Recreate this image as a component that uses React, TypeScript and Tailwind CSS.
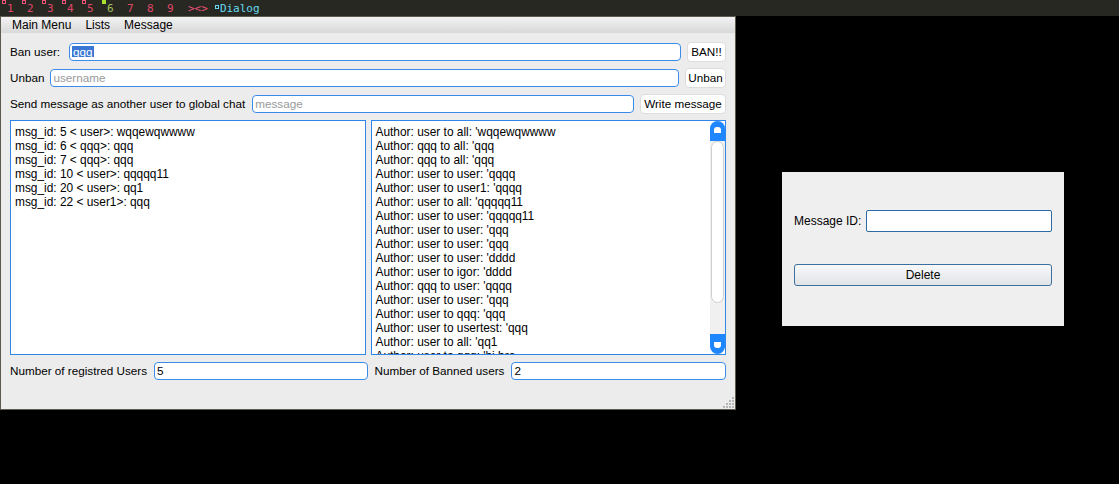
import type { ReactNode } from 'react'

const LEFT_LINES = [
  'msg_id: 5 < user>: wqqewqwwww',
  'msg_id: 6 < qqq>: qqq',
  'msg_id: 7 < qqq>: qqq',
  'msg_id: 10 < user>: qqqqq11',
  'msg_id: 20 < user>: qq1',
  'msg_id: 22 < user1>: qqq',
]

const RIGHT_LINES = [
  "Author: user to all: 'wqqewqwwww",
  "Author: qqq to all: 'qqq",
  "Author: qqq to all: 'qqq",
  "Author: user to user: 'qqqq",
  "Author: user to user1: 'qqqq",
  "Author: user to all: 'qqqqq11",
  "Author: user to user: 'qqqqq11",
  "Author: user to user: 'qqq",
  "Author: user to user: 'qqq",
  "Author: user to user: 'dddd",
  "Author: user to igor: 'dddd",
  "Author: qqq to user: 'qqqq",
  "Author: user to user: 'qqq",
  "Author: user to qqq: 'qqq",
  "Author: user to usertest: 'qqq",
  "Author: user to all: 'qq1",
  "Author: user to qqq: 'hi bro",
]

const WORKSPACES = [
  { n: '1', mark: 'outline' },
  { n: '2', mark: 'outline' },
  { n: '3', mark: 'outline' },
  { n: '4', mark: 'outline' },
  { n: '5', mark: 'outline' },
  { n: '6', mark: 'active' },
  { n: '7', mark: 'none' },
  { n: '8', mark: 'none' },
  { n: '9', mark: 'none' },
]

function TopBar() {
  return (
    <div className="flex h-4 items-center bg-[#272822] pl-[2px] font-['DejaVu_Sans_Mono',monospace] text-[11px] leading-none">
      {WORKSPACES.map((w) => (
        <div key={w.n} className="flex w-5 items-start">
          {w.mark === 'outline' && <span className="mt-[-3px] h-[4px] w-[4px] border border-[#f0527a]" />}
          {w.mark === 'active' && <span className="mt-[-3px] h-[4px] w-[4px] bg-[#a6e22e]" />}
          {w.mark === 'none' && <span className="w-[4px]" />}
          <span className={w.mark === 'active' ? 'ml-[1px] text-[#a6c05a]' : 'ml-[1px] text-[#e0456a]'}>{w.n}</span>
        </div>
      ))}
      <span className="ml-[6px] text-[#f0527a]">&gt;&lt;&gt;</span>
      <span className="ml-[7px] mt-[-3px] h-[4px] w-[4px] border border-[#66d9ef]" />
      <span className="ml-[1px] text-[#66d9ef]">Dialog</span>
    </div>
  )
}

function Field({ children, className = '' }: { children?: ReactNode; className?: string }) {
  return (
    <div
      className={`flex h-[18px] items-center rounded-[4px] border border-[#3b8cea] bg-white px-[2px] leading-none ${className}`}
    >
      {children}
    </div>
  )
}

function Button({ children, className = '' }: { children: ReactNode; className?: string }) {
  return (
    <div
      className={`flex h-[20px] shrink-0 items-center justify-center rounded-[4px] border border-[#dcdcdc] bg-white leading-none text-black ${className}`}
    >
      {children}
    </div>
  )
}

function ScrollBar() {
  return (
    <div className="flex h-full w-[15px] shrink-0 flex-col">
      <div className="flex h-[20px] items-start justify-center rounded-t-[8px] bg-[#1e86ff] pt-[6px]">
        <span className="h-[6px] w-[7px] rounded-t-[3px] bg-white" />
      </div>
      <div className="flex flex-1 flex-col bg-[#f0f0f0] px-[1px] pb-[30px]">
        <div className="h-[162px] rounded-[7px] border border-[#cfcfcf] bg-white" />
      </div>
      <div className="flex h-[20px] items-end justify-center rounded-b-[8px] bg-[#1e86ff] pb-[6px]">
        <span className="h-[6px] w-[7px] rounded-b-[3px] bg-white" />
      </div>
    </div>
  )
}

function MainWindow() {
  return (
    <div className="flex h-[394px] w-[736px] shrink-0 flex-col border border-[#5e5a52] bg-[#ececec] text-[11.7px] text-black">
      <div className="flex h-4 items-center gap-[14px] bg-gradient-to-b from-[#f2f2f2] to-[#d9d9d9] pl-[11px] text-[12px] leading-none">
        <span>Main Menu</span>
        <span>Lists</span>
        <span>Message</span>
      </div>

      <div className="flex flex-1 flex-col gap-[7px] pl-[9px] pr-[9px] pt-[9px]">
        <div className="flex h-[19px] items-center gap-[6px]">
          <span className="mr-[3px]">Ban user:</span>
          <Field className="flex-1">
            <span className="bg-[#3a77d4] px-[1px] text-white">qqq</span>
          </Field>
          <Button className="w-[39px]">BAN!!</Button>
        </div>

        <div className="flex h-[19px] items-center gap-[6px]">
          <span>Unban</span>
          <Field className="flex-1 text-[#9a9a9a]">username</Field>
          <Button className="w-[41px]">Unban</Button>
        </div>

        <div className="flex h-[19px] items-center gap-[6px]">
          <span className="mr-[1px]">Send message as another user to global chat</span>
          <Field className="flex-1 text-[#9a9a9a]">message</Field>
          <Button className="w-[86px]">Write message</Button>
        </div>

        <div className="grid h-[235px] grid-cols-2 gap-[5px] text-[11.9px]">
          <div className="overflow-hidden border border-[#2f86ea] bg-white px-[4px] pt-[4px] leading-[14px]">
            {LEFT_LINES.map((l) => (
              <div key={l} className="whitespace-pre">{l}</div>
            ))}
          </div>
          <div className="flex overflow-hidden border border-[#2f86ea] bg-white">
            <div className="flex-1 overflow-hidden px-[4px] pt-[4px] leading-[14px]">
              {RIGHT_LINES.map((l, i) => (
                <div key={i} className="whitespace-pre">{l}</div>
              ))}
            </div>
            <ScrollBar />
          </div>
        </div>

        <div className="grid grid-cols-2 gap-[5px]">
          <div className="flex items-center gap-[7px]">
            <span>Number of registred Users</span>
            <Field className="mr-[-2px] flex-1">5</Field>
          </div>
          <div className="flex items-center gap-[7px]">
            <span className="ml-[4px]">Number of Banned users</span>
            <Field className="flex-1">2</Field>
          </div>
        </div>

        <div className="mr-[-8px] flex flex-1 items-end justify-end pb-[1px]">
          <svg width="11" height="11" viewBox="0 0 11 11">
            {[
              [9, 0],
              [6, 3],
              [9, 3],
              [3, 6],
              [6, 6],
              [9, 6],
              [0, 9],
              [3, 9],
              [6, 9],
              [9, 9],
            ].map(([x, y]) => (
              <rect key={`${x}-${y}`} x={x} y={y} width="2" height="2" fill="#b5b5b5" />
            ))}
          </svg>
        </div>
      </div>
    </div>
  )
}

function DeleteDialog() {
  return (
    <div className="ml-[46px] mt-[156px] flex h-[154px] w-[282px] shrink-0 flex-col bg-[#efefef] px-[12px] pt-[38px] text-[12px] text-black">
      <div className="flex h-[22px] items-center gap-[5px]">
        <span>Message ID:</span>
        <div className="h-[22px] flex-1 rounded-[2px] border border-[#2b6ca6] bg-white" />
      </div>
      <div className="mt-[32px] flex h-[22px] items-center justify-center rounded-[3px] border border-[#3b6f9e] bg-gradient-to-b from-[#f7f8f9] to-[#e1e4e7] leading-none">
        Delete
      </div>
    </div>
  )
}

export default function App() {
  return (
    <div className="flex h-[484px] w-[1119px] flex-col overflow-hidden bg-black font-['Liberation_Sans',Arial,sans-serif]">
      <TopBar />
      <div className="flex items-start">
        <MainWindow />
        <DeleteDialog />
      </div>
    </div>
  )
}
